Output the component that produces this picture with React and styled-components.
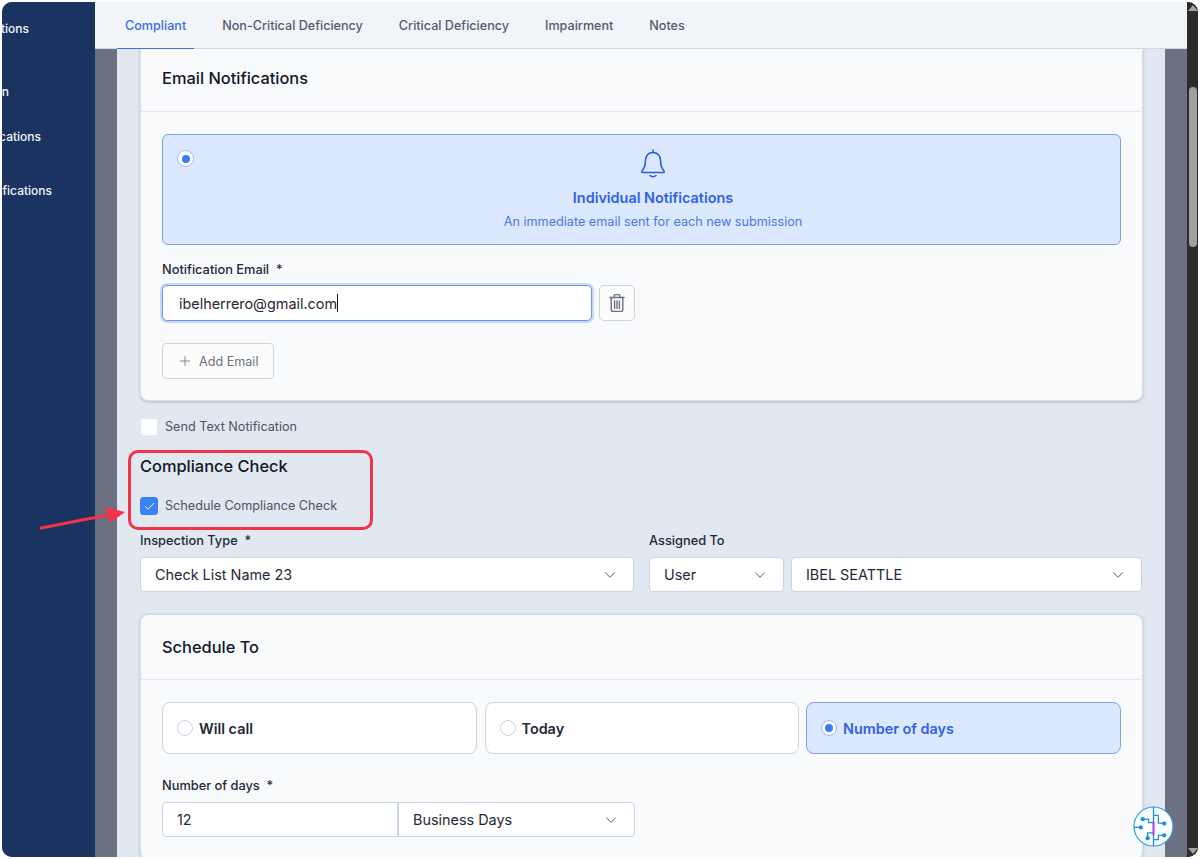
import React from 'react';
import styled, { createGlobalStyle } from 'styled-components';
import { ChevronDown, Plus, Check } from 'lucide-react';

const GlobalStyle = createGlobalStyle`
    html, body {
        margin: 0;
        height: 859px;
        overflow: hidden;
        background: #ffffff;
        font-family: "Inter", "Liberation Sans", sans-serif;
    }
    * { box-sizing: border-box; }
`

const Window = styled.div`
    position: relative;
    display: flex;
    width: 1196px;
    height: 855px;
    margin: 2px;
    border-radius: 10px;
    overflow: hidden;
    background: #6b7180;
`

const Sidebar = styled.aside`
    width: 93px;
    flex: none;
    background: #1a3360;
    display: flex;
    flex-direction: column;
    overflow: hidden;
`

const SideItem = styled.div`
    width: ${p => p.$width}px;
    margin-top: ${p => p.$top}px;
    display: flex;
    justify-content: flex-end;
    white-space: nowrap;
    color: #f4f6fa;
    font-size: 12px;
    font-weight: 500;
    line-height: 18px;
`

const Main = styled.div`
    flex: 1;
    min-width: 0;
    display: flex;
    flex-direction: column;
`

const TabBar = styled.nav`
    height: 47px;
    flex: none;
    display: flex;
    gap: 20px;
    padding-left: 22px;
    background: #f1f4f9;
    border-bottom: 1px solid #cfd8e6;
`

const Tab = styled.div`
    height: 47px;
    padding: 0 8px;
    display: flex;
    align-items: center;
    font-size: 12.6px;
    font-weight: 500;
    color: ${p => (p.$active ? '#3b6fe8' : '#525c6c')};
    border-bottom: ${p => (p.$active ? '1px solid #3b6fe8' : 'none')};
`

const Backdrop = styled.div`
    flex: 1;
    min-height: 0;
    padding: 0 22px;
    background: #6b7180;
`

const Content = styled.main`
    position: relative;
    height: 100%;
    padding: 0 22px 0 23px;
    background: #e2e8f0;
    overflow: hidden;
`

const Card = styled.section`
    background: #f9fafc;
    border: 1px solid #d6deea;
    border-top: ${p => (p.$clipped ? 'none' : '1px solid #c9d4e4')};
    border-radius: ${p => (p.$clipped ? '0 0 8px 8px' : '8px')};
    box-shadow: 0 1px 3px rgba(60, 72, 100, 0.3);
    margin-top: ${p => p.$top || 0}px;
`

const CardHeader = styled.header`
    height: ${p => p.$height}px;
    padding: 0 0 ${p => p.$lift || 0}px 21px;
    display: flex;
    align-items: center;
    border-bottom: 1px solid #e5e9ef;
    font-size: 16.4px;
    font-weight: 500;
    color: #111827;
`

const CardBody = styled.div`
    padding: 22px 21px ${p => p.$bottom}px 21px;
`

const NoticeBox = styled.div`
    position: relative;
    height: 111px;
    padding: 14px 0 0 23px;
    display: flex;
    flex-direction: column;
    align-items: center;
    background: #dbe8fe;
    border: 1px solid #7f9ff0;
    border-radius: 6px;
    color: #2f62e6;
`

const NoticeRadio = styled.span`
    position: absolute;
    left: 14px;
    top: 15px;
    width: 17px;
    height: 17px;
    border-radius: 50%;
    background: #fff;
    border: 1px solid #9db8f4;
    display: flex;
    align-items: center;
    justify-content: center;
    &::after {
        content: "";
        width: 8px;
        height: 8px;
        border-radius: 50%;
        background: #3b7bf0;
    }
`

const NoticeTitle = styled.div`
    margin-top: 9px;
    font-size: 14.4px;
    font-weight: 600;
    line-height: 20px;
`

const NoticeText = styled.div`
    margin-top: 6px;
    font-size: 12.65px;
    line-height: 16px;
    color: #4c78ea;
`

const FieldLabel = styled.label`
    display: block;
    margin-top: ${p => p.$top || 0}px;
    margin-bottom: ${p => p.$bottom || 9}px;
    font-size: 12.8px;
    font-weight: 500;
    line-height: 15px;
    color: #1f2937;
    white-space: pre;
`

const EmailRow = styled.div`
    display: flex;
    gap: 7px;
`

const EmailInput = styled.div`
    width: 430px;
    height: 36px;
    padding-left: 16px;
    display: flex;
    align-items: center;
    background: #fff;
    border: 1px solid #6f95ee;
    border-radius: 5px;
    box-shadow: 0 0 0 2px #c7d8f8;
    font-size: 14.4px;
    color: #1f2937;
`

const Caret = styled.span`
    width: 1px;
    height: 18px;
    background: #111827;
`

const IconButton = styled.button`
    width: 36px;
    height: 36px;
    padding: 0;
    display: flex;
    align-items: center;
    justify-content: center;
    background: #fcfcfd;
    border: 1px solid #ccd4e0;
    border-radius: 5px;
`

const AddButton = styled.button`
    width: 112px;
    height: 36px;
    margin-top: 22px;
    padding: 0 0 0 14px;
    display: flex;
    align-items: center;
    gap: 6px;
    background: #fcfcfd;
    border: 1px solid #ccd4e0;
    border-radius: 4px;
    font-family: inherit;
    font-size: 12.6px;
    color: #6b7280;
`

const CheckRow = styled.div`
    display: flex;
    align-items: center;
    gap: 7px;
    margin-top: ${p => p.$top}px;
    font-size: 12.65px;
    line-height: 18px;
    color: #4b5563;
`

const CheckBox = styled.span`
    width: 18px;
    height: 18px;
    display: flex;
    align-items: center;
    justify-content: center;
    border-radius: 3px;
    background: ${p => (p.$checked ? '#3b82f6' : '#ffffff')};
    border: 1px solid ${p => (p.$checked ? '#3b7bf0' : '#e4e9f0')};
`

const SectionTitle = styled.h2`
    margin: 20px 0 0;
    font-size: 16.4px;
    font-weight: 500;
    line-height: 20px;
    color: #111827;
`

const FormGrid = styled.div`
    display: grid;
    grid-template-columns: 494px 493px;
    column-gap: 15px;
    margin-top: 18px;
`

const AssignedRow = styled.div`
    display: grid;
    grid-template-columns: 135px 351px;
    column-gap: 7px;
`

const SelectBox = styled.div`
    width: ${p => (p.$width ? `${p.$width}px` : 'auto')};
    height: 35px;
    padding: 0 14px;
    display: flex;
    align-items: center;
    justify-content: space-between;
    background: #fff;
    border: 1px solid #c9d4e4;
    border-radius: ${p => p.$radius || '4px'};
    font-size: 14.4px;
    color: #1f2937;
`

const RadioGrid = styled.div`
    display: grid;
    grid-template-columns: 315px 314px 315px;
    gap: 7.5px;
`

const RadioCard = styled.div`
    height: 52px;
    padding-left: 14px;
    display: flex;
    align-items: center;
    gap: 6px;
    border-radius: 8px;
    background: ${p => (p.$active ? '#dbe8fe' : '#ffffff')};
    border: 1px solid ${p => (p.$active ? '#7f9ff0' : '#c9d4e4')};
    color: ${p => (p.$active ? '#2f62e6' : '#1f2937')};
    font-size: 14.4px;
    font-weight: 600;
`

const RadioDot = styled.span`
    width: 16px;
    height: 16px;
    border-radius: 50%;
    background: #fff;
    border: 1px solid ${p => (p.$active ? '#9db8f4' : '#ccd5e2')};
    display: flex;
    align-items: center;
    justify-content: center;
    &::after {
        content: "";
        width: 8px;
        height: 8px;
        border-radius: 50%;
        background: ${p => (p.$active ? '#3b7bf0' : 'transparent')};
    }
`

const DaysRow = styled.div`
    display: flex;
    width: 473px;
`

const Callout = styled.div`
    position: absolute;
    left: 11px;
    top: 401px;
    width: 245px;
    height: 80px;
    border: 3px solid #f4324a;
    border-radius: 10px;
    pointer-events: none;
`

const ArrowSvg = styled.svg`
    position: absolute;
    left: 36px;
    top: 500px;
    width: 92px;
    height: 36px;
`

const BotBadge = styled.svg`
    position: absolute;
    left: 1131px;
    top: 804px;
    width: 41px;
    height: 41px;
`

const Scrollbar = styled.div`
    width: 11px;
    flex: none;
    display: flex;
    flex-direction: column;
    align-items: center;
    justify-content: space-between;
    padding: 3px 0;
    background: #2b2b2b;
    position: relative;
`

const ScrollArrow = styled.span`
    width: 0;
    height: 0;
    border-left: 5px solid transparent;
    border-right: 5px solid transparent;
    ${p => (p.$down
        ? 'border-top: 6px solid #a3a3a3;'
        : 'border-bottom: 6px solid #a3a3a3;')}
`

const ScrollThumb = styled.span`
    position: absolute;
    left: 2px;
    top: 85px;
    width: 8px;
    height: 160px;
    border-radius: 4px;
    background: #9f9f9f;
`

const chevron = <ChevronDown size={18} strokeWidth={1.25} color="#4b5563" />

function BellIcon() {
    return (
        <svg width="28" height="30" viewBox="0 0 28 30" fill="none" stroke="#2459e0" strokeWidth="1.5" strokeLinecap="round" strokeLinejoin="round">
            <path d="M14 1v2.5" />
            <path d="M14 3.5c-4.6 0-7.5 3.4-7.5 7.8 0 5.2-1 8-3.5 10.6-.6.7-.2 1.6.7 1.6h20.6c.9 0 1.3-.9.7-1.6-2.5-2.6-3.5-5.4-3.5-10.6 0-4.4-2.9-7.8-7.5-7.8z" />
            <path d="M11 26.5c1.6 1.6 4.4 1.6 6 0" />
        </svg>
    );
}

function TrashIcon() {
    return (
        <svg width="18" height="20" viewBox="0 0 18 20" fill="none" stroke="#6b7280" strokeWidth="1.4" strokeLinecap="round" strokeLinejoin="round">
            <path d="M2 4.5h14" />
            <path d="M6.2 4.5V2.6c0-.6.4-1 1-1h3.6c.6 0 1 .4 1 1v1.9" />
            <path d="M3.2 4.5v12c0 1 .8 1.9 1.8 1.9h8c1 0 1.8-.9 1.8-1.9v-12" />
            <path d="M6.6 8v7.4M9 8v7.4M11.4 8v7.4" />
        </svg>
    );
}

function BotIcon() {
    return (
        <BotBadge viewBox="0 0 42 42" fill="none">
            <circle cx="21" cy="21" r="20" fill="#fbfdff" stroke="#2aa0e0" strokeWidth="1.2" />
            <g stroke="#1a8fe0" strokeWidth="1.3" fill="none">
                <path d="M21 1v40" />
                <path d="M10 13.5h6v3.5h5" />
                <path d="M1 22h7" />
                <path d="M15 33v-5.5h6" />
                <path d="M21 9.5h5v8h6" />
                <path d="M21 34.5h5V30h6" />
                <path d="M21 16v14" stroke="#b54cf0" strokeWidth="2.2" />
            </g>
            <g fill="#1a8fe0">
                <circle cx="10" cy="13.5" r="2.2" />
                <circle cx="8" cy="22" r="2.2" />
                <circle cx="15" cy="33" r="2.2" />
                <circle cx="32" cy="18" r="2.2" />
                <circle cx="32" cy="30" r="2.2" />
            </g>
        </BotBadge>
    );
}

function App() {
    return (
        <>
            <GlobalStyle />
            <Window>
                <Sidebar>
                    <SideItem $width={27} $top={18}>Inspections</SideItem>
                    <SideItem $width={7} $top={45}>Admin</SideItem>
                    <SideItem $width={39} $top={27}>Applications</SideItem>
                    <SideItem $width={50} $top={36}>Notifications</SideItem>
                </Sidebar>
                <Main>
                    <TabBar>
                        <Tab $active>Compliant</Tab>
                        <Tab>Non-Critical Deficiency</Tab>
                        <Tab>Critical Deficiency</Tab>
                        <Tab>Impairment</Tab>
                        <Tab>Notes</Tab>
                    </TabBar>
                    <Backdrop>
                        <Content>
                            <Card $clipped>
                                <CardHeader $height={63} $lift={5}>Email Notifications</CardHeader>
                                <CardBody $bottom={21}>
                                    <NoticeBox>
                                        <NoticeRadio />
                                        <BellIcon />
                                        <NoticeTitle>Individual Notifications</NoticeTitle>
                                        <NoticeText>An immediate email sent for each new submission</NoticeText>
                                    </NoticeBox>
                                    <FieldLabel $top={17} $bottom={8}>{'Notification Email  *'}</FieldLabel>
                                    <EmailRow>
                                        <EmailInput>ibelherrero@gmail.com<Caret /></EmailInput>
                                        <IconButton><TrashIcon /></IconButton>
                                    </EmailRow>
                                    <AddButton><Plus size={16} strokeWidth={1.25} color="#6b7280" />Add Email</AddButton>
                                </CardBody>
                            </Card>
                            <CheckRow $top={17}>
                                <CheckBox />
                                Send Text Notification
                            </CheckRow>
                            <SectionTitle>Compliance Check</SectionTitle>
                            <CheckRow $top={21}>
                                <CheckBox $checked><Check size={13} strokeWidth={1.75} color="#fff" /></CheckBox>
                                Schedule Compliance Check
                            </CheckRow>
                            <FormGrid>
                                <div>
                                    <FieldLabel>{'Inspection Type  *'}</FieldLabel>
                                    <SelectBox>Check List Name 23{chevron}</SelectBox>
                                </div>
                                <div>
                                    <FieldLabel>Assigned To</FieldLabel>
                                    <AssignedRow>
                                        <SelectBox>User{chevron}</SelectBox>
                                        <SelectBox>IBEL SEATTLE{chevron}</SelectBox>
                                    </AssignedRow>
                                </div>
                            </FormGrid>
                            <Card $top={22}>
                                <CardHeader $height={65}>Schedule To</CardHeader>
                                <CardBody $bottom={22}>
                                    <RadioGrid>
                                        <RadioCard><RadioDot />Will call</RadioCard>
                                        <RadioCard><RadioDot />Today</RadioCard>
                                        <RadioCard $active><RadioDot $active />Number of days</RadioCard>
                                    </RadioGrid>
                                    <FieldLabel $top={24}>{'Number of days  *'}</FieldLabel>
                                    <DaysRow>
                                        <SelectBox $width={236} $radius="4px 0 0 4px">12</SelectBox>
                                        <SelectBox $width={237} $radius="0 4px 4px 0">Business Days{chevron}</SelectBox>
                                    </DaysRow>
                                </CardBody>
                            </Card>
                            <Callout />
                        </Content>
                    </Backdrop>
                </Main>
                <Scrollbar>
                    <ScrollArrow />
                    <ScrollThumb />
                    <ScrollArrow $down />
                </Scrollbar>
                <ArrowSvg viewBox="0 0 92 36" fill="none">
                    <path d="M3 26L70 13" stroke="#f4324a" strokeWidth="3" strokeLinecap="round" />
                    <path d="M87 10L67 5l5 16z" fill="#f4324a" />
                </ArrowSvg>
                <BotIcon />
            </Window>
        </>
    );
}

export default App;
